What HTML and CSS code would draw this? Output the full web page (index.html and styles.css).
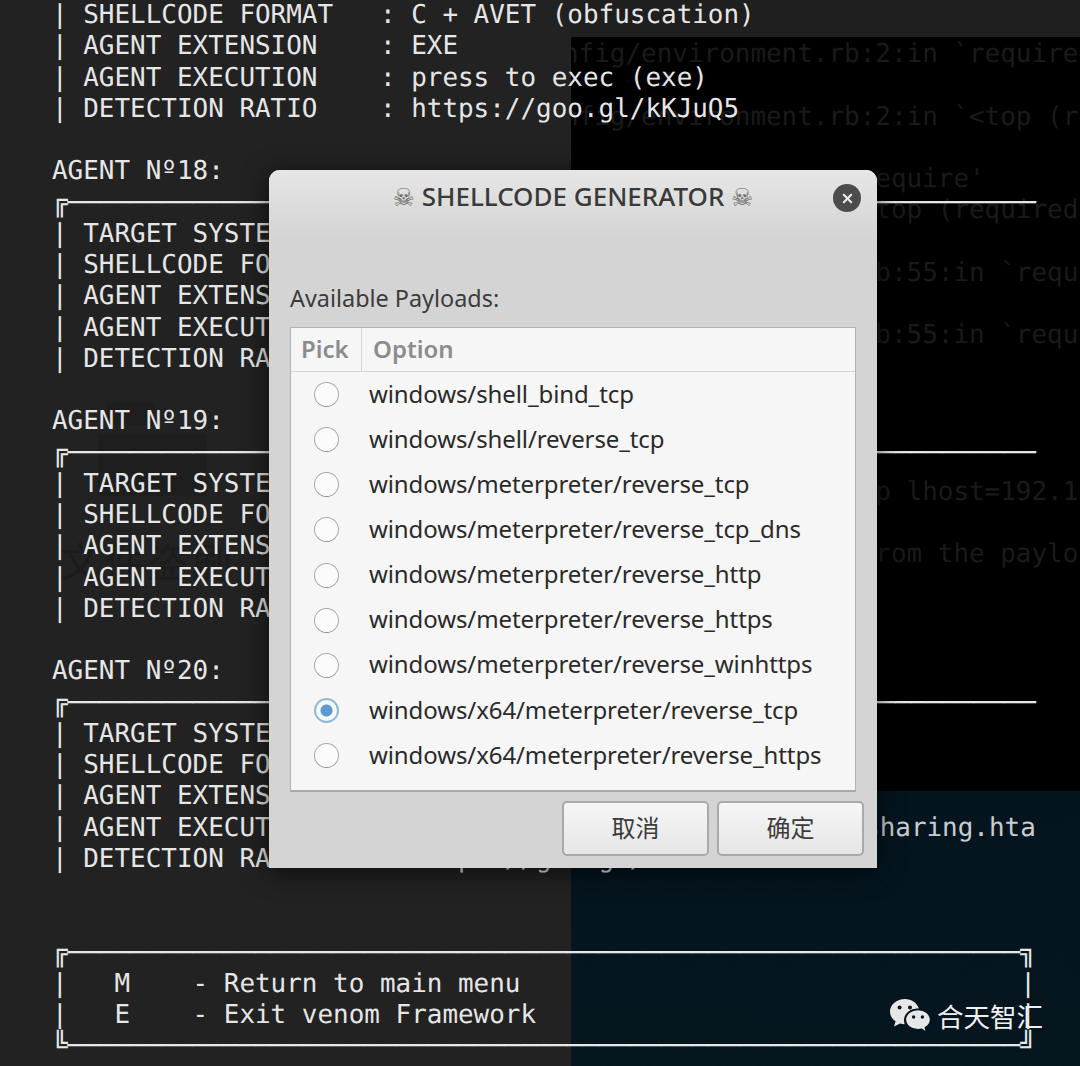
FILE: index.html
```html
<!DOCTYPE html>
<html lang="en">
<head>
<meta charset="utf-8">
<title>SHELLCODE GENERATOR</title>
<link rel="stylesheet" href="styles.css">
</head>
<body>
<div class="screen">
  <div class="backdrop">
    <div class="back-strip"></div>
    <div class="back-panel">
      <pre class="back-term">nfig/environment.rb:2:in `require'

nfig/environment.rb:2:in `&lt;top (required)&gt;'

                   require'
                    top (required)&gt;'

                    b:55:in `require'

                    b:55:in `require'




                    p lhost=192.168.1.1

                    rom the payload</pre>
    </div>
    <div class="back-night"></div>
    <div class="smudge smudge-a"></div>
    <div class="smudge smudge-b"></div>
    <div class="smudge-text">文件盗刷</div>
  </div>

  <pre class="term">| SHELLCODE FORMAT   : C + AVET (obfuscation)
| AGENT EXTENSION    : EXE
| AGENT EXECUTION    : press to exec (exe)
| DETECTION RATIO    : https://goo.gl/kKJuQ5

AGENT Nº18:
╔──────────────────────────────────────────────────────────────
| TARGET SYSTEM      : Windows
| SHELLCODE FORMAT   : C + AVET
| AGENT EXTENSION    : EXE
| AGENT EXECUTION    : press to exec (exe)
| DETECTION RATIO    : https://goo.gl/kKJuQ5

AGENT Nº19:
╔──────────────────────────────────────────────────────────────
| TARGET SYSTEM      : Windows
| SHELLCODE FORMAT   : C + AVET
| AGENT EXTENSION    : EXE
| AGENT EXECUTION    : press to exec (exe)
| DETECTION RATIO    : https://goo.gl/kKJuQ5

AGENT Nº20:
╔──────────────────────────────────────────────────────────────
| TARGET SYSTEM      : Windows
| SHELLCODE FORMAT   : C + AVET
| AGENT EXTENSION    : HTA
| AGENT EXECUTION    : http://LHOST/webserver_files_<span class="dim">sharing.hta</span>
| DETECTION RATIO    : https://goo.gl/dKmR5


╔─────────────────────────────────────────────────────────────╗
|   M    - Return to main menu                                |
|   E    - Exit venom Framework                               |
╚─────────────────────────────────────────────────────────────╝</pre>

  <div class="watermark">
    <svg class="wechat" viewBox="0 0 42 36" width="42" height="36" aria-hidden="true">
      <path class="bubble" d="M16 1C7.6 1 1 6.6 1 13.6c0 4 2.2 7.4 5.6 9.7L5 28.6l6.1-3c1.5.4 3 .6 4.6.7-.5-1.4-.7-2.7-.7-4 0-6.6 6-11.700 13.900-11.700h1C28 5 22.600 1 16 1z"/>
      <circle class="eye" cx="10.600" cy="9.600" r="2"/>
      <circle class="eye" cx="21" cy="9.600" r="2"/>
      <path class="bubble-front" d="M29 11.500c-7 0-12.600 4.500-12.600 10.100S22 31.700 29 31.700c1.300 0 2.600-.2 3.800-.5l4.700 3.300-1.200-4.800c3.400-1.900 5.200-4.800 5.200-8.100 0-5.600-5.500-10.100-12.500-10.100z"/>
      <circle class="eye" cx="24.600" cy="19" r="1.700"/>
      <circle class="eye" cx="33.400" cy="19" r="1.700"/>
    </svg>
    <span class="watermark-name">合天智汇</span>
  </div>

  <section class="dialog">
    <header class="titlebar">
      <h1 class="title"><span class="skull">☠</span> SHELLCODE GENERATOR <span class="skull">☠</span></h1>
      <span class="close">
        <svg viewBox="0 0 12 12" width="11" height="11" aria-hidden="true"><path d="M2 2l8 8M10 2l-8 8"/></svg>
      </span>
    </header>
    <div class="body">
      <p class="prompt">Available Payloads:</p>
      <div class="list">
        <div class="list-head">
          <div class="head-pick">Pick</div>
          <div class="head-option">Option</div>
        </div>
        <div class="rows">
          <div class="row"><span class="radio"></span><span class="label">windows/shell_bind_tcp</span></div>
          <div class="row"><span class="radio"></span><span class="label">windows/shell/reverse_tcp</span></div>
          <div class="row"><span class="radio"></span><span class="label">windows/meterpreter/reverse_tcp</span></div>
          <div class="row"><span class="radio"></span><span class="label">windows/meterpreter/reverse_tcp_dns</span></div>
          <div class="row"><span class="radio"></span><span class="label">windows/meterpreter/reverse_http</span></div>
          <div class="row"><span class="radio"></span><span class="label">windows/meterpreter/reverse_https</span></div>
          <div class="row"><span class="radio"></span><span class="label">windows/meterpreter/reverse_winhttps</span></div>
          <div class="row"><span class="radio checked"></span><span class="label">windows/x64/meterpreter/reverse_tcp</span></div>
          <div class="row"><span class="radio"></span><span class="label">windows/x64/meterpreter/reverse_https</span></div>
        </div>
      </div>
      <div class="actions">
        <button class="btn" type="button">取消</button>
        <button class="btn" type="button">确定</button>
      </div>
    </div>
  </section>
</div>
</body>
</html>
```
FILE: styles.css
```css
* { box-sizing: border-box; }
html, body { margin: 0; padding: 0; }
body { background: #222222; }

.screen {
  position: relative;
  width: 1080px;
  height: 1066px;
  overflow: hidden;
  background: #222222;
}

/* Layers behind the terminal */
.backdrop { position: absolute; inset: 0; }
.back-strip {
  position: absolute;
  left: 571px; top: 0;
  width: 509px; height: 37px;
  background: #1f1f1f;
}
.back-panel {
  position: absolute;
  left: 571px; top: 37px;
  width: 509px; height: 754px;
  overflow: hidden;
  background: #000000;
}
.back-term {
  margin: 2px 0 0 -8px;
  color: #1a1a1a;
  font-family: "DejaVu Sans Mono", monospace;
  font-size: 25.95px;
  line-height: 31.25px;
  white-space: pre;
  text-rendering: geometricPrecision;
}
.back-night {
  position: absolute;
  left: 571px; top: 791px;
  width: 509px; height: 275px;
  background:
    repeating-linear-gradient(135deg, rgba(255,255,255,.005) 0 2px, rgba(0,0,0,0) 2px 7px),
    linear-gradient(180deg, #03141f 0%, #05161f 100%);
}
.smudge { position: absolute; background: #1e1e1e; }
.smudge-a { left: 107px; top: 403px; width: 47px; height: 22px; }
.smudge-b { left: 98px; top: 435px; width: 109px; height: 61px; }
.smudge-text {
  position: absolute;
  left: 60px; top: 538px;
  color: #1c1c1c;
  font-family: "Noto Sans CJK SC", sans-serif;
  font-size: 40px;
  line-height: 44px;
  letter-spacing: 4px;
}

/* Foreground terminal */
.term {
  position: relative;
  margin: 0 0 0 52px;
  color: #e6e6e6;
  font-family: "DejaVu Sans Mono", monospace;
  font-size: 25.95px;
  line-height: 31.25px;
  white-space: pre;
  text-rendering: geometricPrecision;
}
.dim { color: #c9cccc; }

/* Watermark */
.watermark {
  position: absolute;
  left: 889px; top: 998px;
  display: flex;
  align-items: center;
  gap: 6px;
}
.wechat { display: block; }
.bubble, .bubble-front { fill: #e7e7e7; }
.bubble-front { stroke: #06151f; stroke-width: 1.4; }
.eye { fill: #06151f; }
.watermark-name {
  color: #f0f0f0;
  font-family: "Noto Sans CJK SC", sans-serif;
  font-size: 26.5px;
  line-height: 36px;
}

/* Dialog window */
.dialog {
  position: absolute;
  left: 269px; top: 170px;
  width: 608px; height: 698px;
  display: flex;
  flex-direction: column;
  background: #d4d4d4;
  border-radius: 11px 11px 0 0;
  box-shadow: 0 4px 26px rgba(0,0,0,.65);
  font-family: "Noto Sans", sans-serif;
}
.titlebar {
  position: relative;
  height: 70px;
  flex: none;
  display: flex;
  justify-content: center;
  padding-top: 9px;
  border-radius: 11px 11px 0 0;
  background: linear-gradient(180deg, #e6e6e6 0%, #d4d4d4 100%);
}
.title {
  margin: 0;
  color: #3a3a3a;
  font-size: 26px;
  line-height: 34px;
  font-weight: 500;
  white-space: pre;
}
.skull {
  color: #6a6a6a;
  font-family: "DejaVu Sans", sans-serif;
  font-weight: 400;
  font-size: 25px;
}
.close {
  position: absolute;
  right: 16px; top: 14px;
  width: 28px; height: 28px;
  display: flex;
  align-items: center;
  justify-content: center;
  border-radius: 50%;
  background: #4c4c4c;
}
.close svg path { fill: none; stroke: #e8e8e8; stroke-width: 2.4; stroke-linecap: round; }

.body {
  flex: 1;
  display: flex;
  flex-direction: column;
  padding: 0 13px 12px 21px;
}
.prompt {
  margin: 42px 0 0;
  height: 45px;
  color: #3c3c3c;
  font-size: 23.4px;
  line-height: 32px;
}
.list {
  width: 566px;
  height: 465px;
  flex: none;
  border: 1px solid #b2b2b2;
  border-bottom: 2px solid #a8a8a8;
  background: #f6f6f6;
}
.list-head {
  display: flex;
  height: 44px;
  border-bottom: 1px solid #d6d6d6;
  color: #8c8c8c;
  font-size: 24px;
  font-weight: 600;
  line-height: 41px;
}
.head-pick { width: 71px; padding-left: 10px; border-right: 1px solid #d6d6d6; }
.head-option { padding-left: 11px; }
.rows { display: flex; flex-direction: column; }
.row {
  display: flex;
  align-items: center;
  height: 45.15px;
}
.radio {
  flex: none;
  width: 25px; height: 25px;
  margin-left: 23px;
  border: 1px solid #a9a9a9;
  border-bottom-color: #8f8f8f;
  border-radius: 50%;
  background: #fbfbfb;
}
.radio.checked {
  border: 2px solid #8db8dc;
  background: radial-gradient(circle, #5b9bd0 0 5.5px, #f8f8f8 6.5px);
}
.label {
  margin-left: 30px;
  color: #2a2a2a;
  font-size: 24px;
  line-height: 30px;
  letter-spacing: -.1px;
  padding-bottom: 2px;
  white-space: pre;
}
.actions {
  display: flex;
  justify-content: flex-end;
  gap: 8px;
  margin-top: 9px;
}
.btn {
  width: 147px; height: 55px;
  padding: 0 0 4px;
  border: 2px solid #a9a9a9;
  border-radius: 5px;
  background: linear-gradient(180deg, #f6f6f6 0%, #e6e6e6 100%);
  color: #3c3c3c;
  font-family: "Noto Sans CJK SC", sans-serif;
  font-size: 24px;
}
```
